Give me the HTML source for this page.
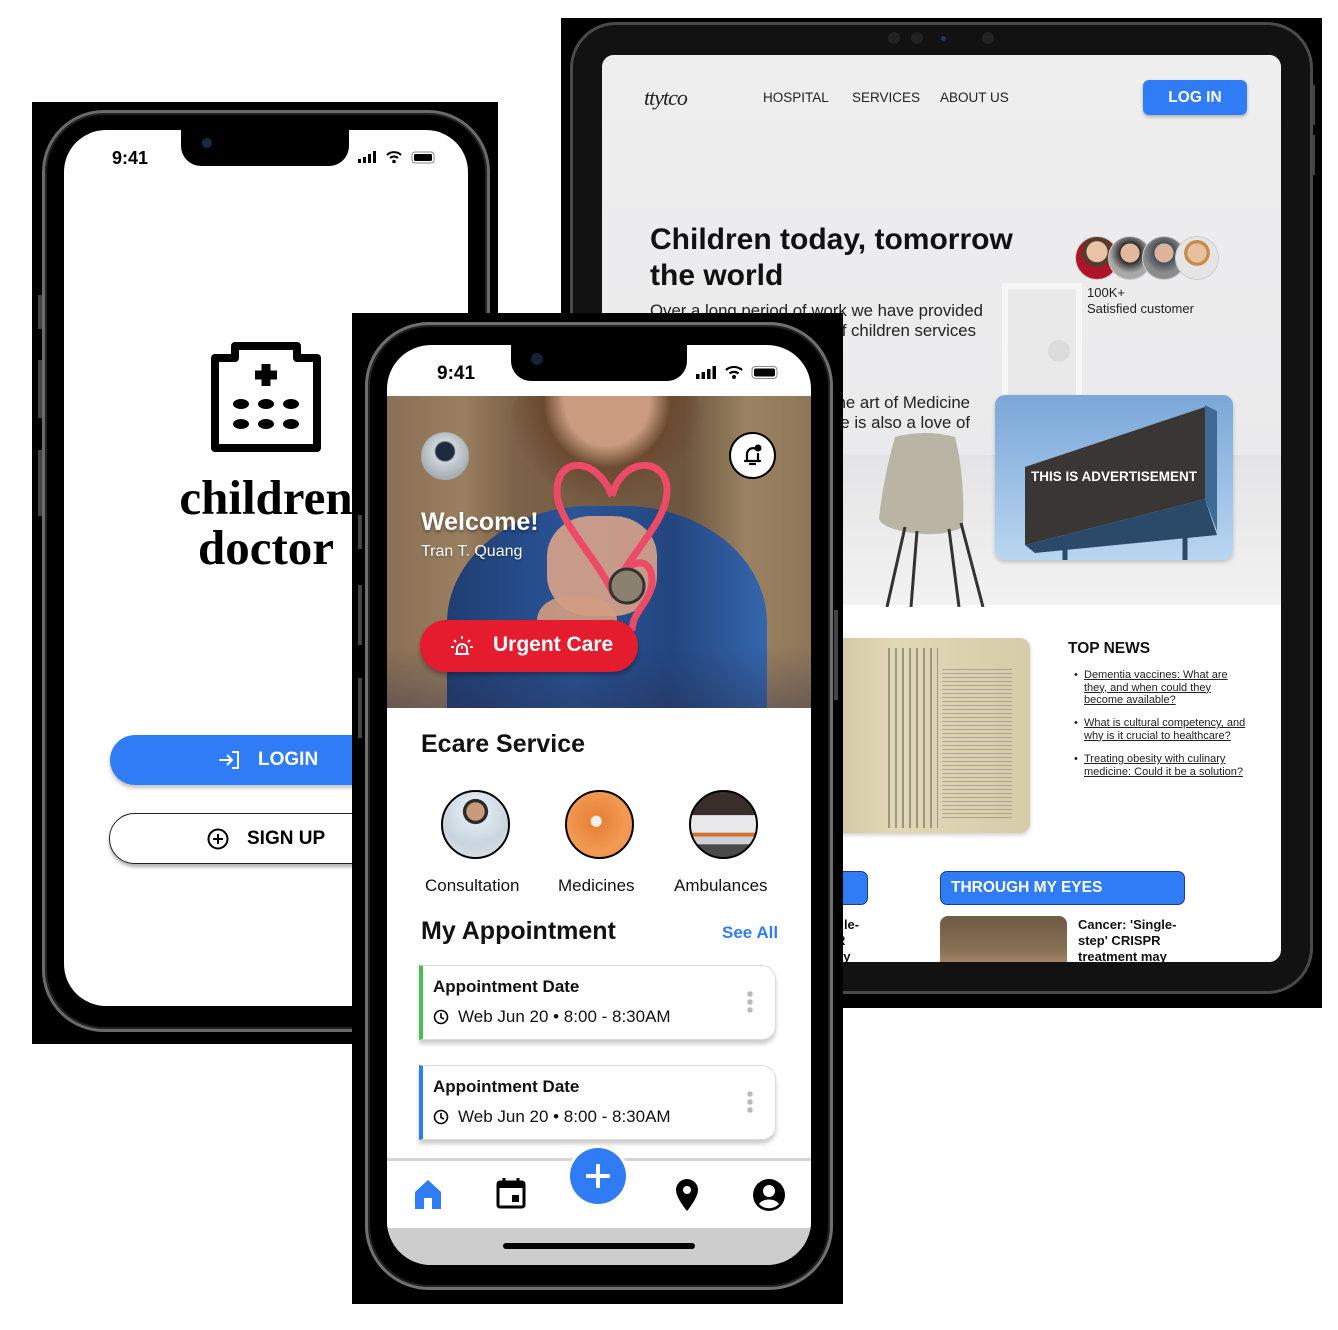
<!DOCTYPE html>
<html><head><meta charset="utf-8">
<style>
*{margin:0;padding:0;box-sizing:border-box}
body{width:1338px;height:1330px;background:#fff;position:relative;overflow:hidden;font-family:"Liberation Sans",Arial,sans-serif}
.a{position:absolute}
.t{position:absolute;white-space:nowrap}
</style></head><body>

<!-- ============ LEFT PHONE ============ -->
<div class="a" style="left:32px;top:102px;width:466px;height:942px;background:#000"></div>
<div class="a" style="left:42px;top:110px;width:448px;height:922px;border-radius:62px;border:3px solid #6a6a6a;box-shadow:inset 0 0 0 2px #222"></div>
<div class="a" style="left:38px;top:295px;width:4px;height:34px;background:#444"></div>
<div class="a" style="left:38px;top:360px;width:4px;height:58px;background:#444"></div>
<div class="a" style="left:38px;top:450px;width:4px;height:66px;background:#444"></div>
<div class="a" style="left:64px;top:130px;width:404px;height:876px;border-radius:42px;background:#fff;overflow:hidden">
  <div class="a" style="left:117px;top:0;width:168px;height:36px;background:#000;border-radius:0 0 20px 20px"></div>
  <div class="a" style="left:138px;top:8px;width:10px;height:10px;border-radius:50%;background:#1a2a44"></div>
  <div class="t" style="left:48px;top:18px;font-size:18px;font-weight:bold">9:41</div>
  <svg class="a" style="left:294px;top:21px" width="82" height="14" viewBox="0 0 82 14"><rect x="0" y="8" width="3" height="4" fill="#000"/><rect x="5" y="6" width="3" height="6" fill="#000"/><rect x="10" y="3" width="3" height="9" fill="#000"/><rect x="15" y="0" width="3" height="12" fill="#000"/><path d="M29 4a10 10 0 0 1 14 0M32 7a6 6 0 0 1 8 0" stroke="#000" stroke-width="2" fill="none"/><circle cx="36" cy="10.5" r="1.8"/><rect x="54" y="1" width="22" height="11" rx="3" fill="none" stroke="#888"/><rect x="56" y="3" width="18" height="7" rx="1.5" fill="#000"/></svg>
  <svg class="a" style="left:147px;top:212px" width="110" height="110" viewBox="0 0 110 110"><path d="M24 4h62v12h20v90H4V16h20z" fill="none" stroke="#000" stroke-width="8" stroke-linejoin="round"/><path d="M55 22v22M44 33h22" stroke="#000" stroke-width="9"/><g fill="#000"><ellipse cx="30" cy="62" rx="8" ry="5"/><ellipse cx="55" cy="62" rx="8" ry="5"/><ellipse cx="80" cy="62" rx="8" ry="5"/><ellipse cx="30" cy="82" rx="8" ry="5"/><ellipse cx="55" cy="82" rx="8" ry="5"/><ellipse cx="80" cy="82" rx="8" ry="5"/></g></svg>
  <div class="a" style="left:0;top:343px;width:404px;text-align:center;font-family:'Liberation Serif',serif;font-weight:bold;font-size:49px;line-height:50px">children<br>doctor</div>
  <div class="a" style="left:46px;top:605px;width:380px;height:50px;border-radius:25px;background:#2f7cf6;box-shadow:0 3px 4px rgba(0,0,0,.25)"></div>
  <svg class="a" style="left:154px;top:620px" width="22" height="20" viewBox="0 0 22 20"><path d="M1 10h12M9 5l5 5-5 5M14 2h6v16h-6" stroke="#fff" stroke-width="2" fill="none"/></svg>
  <div class="t" style="left:194px;top:619px;font-size:19px;font-weight:bold;color:#fff">LOGIN</div>
  <div class="a" style="left:45px;top:683px;width:380px;height:51px;border-radius:26px;border:1.5px solid #222;box-shadow:0 3px 3px rgba(0,0,0,.3)"></div>
  <svg class="a" style="left:143px;top:698px" width="22" height="22" viewBox="0 0 22 22"><circle cx="11" cy="11" r="9.5" stroke="#000" stroke-width="2" fill="none"/><path d="M11 6v10M6 11h10" stroke="#000" stroke-width="2"/></svg>
  <div class="t" style="left:183px;top:698px;font-size:19px;font-weight:bold">SIGN UP</div>
</div>

<!-- ============ TABLET ============ -->
<div class="a" style="left:561px;top:18px;width:761px;height:990px;background:#000"></div>
<div class="a" style="left:570px;top:22px;width:743px;height:972px;border-radius:46px;border:3px solid #4a4a4a;background:#121212"></div>
<div class="a" style="left:1312px;top:85px;width:3px;height:40px;background:#444"></div>
<div class="a" style="left:1312px;top:135px;width:3px;height:40px;background:#444"></div>
<div class="a" style="left:888px;top:32px;width:12px;height:12px;border-radius:50%;background:#222"></div>
<div class="a" style="left:911px;top:32px;width:12px;height:12px;border-radius:50%;background:#222"></div>
<div class="a" style="left:941px;top:36px;width:5px;height:5px;border-radius:50%;background:#1c3a66"></div>
<div class="a" style="left:982px;top:32px;width:12px;height:12px;border-radius:50%;background:#222"></div>
<div class="a" style="left:602px;top:55px;width:679px;height:907px;border-radius:12px;background:#fff;overflow:hidden">
  <div class="a" style="left:0;top:0;width:679px;height:550px;background:linear-gradient(#eeeeef,#e9e9eb)"></div>
  <div class="a" style="left:240px;top:400px;width:439px;height:150px;background:linear-gradient(#e4e4e6,#f2f2f2)"></div>
  <div class="a" style="left:400px;top:228px;width:80px;height:170px;border:6px solid #f6f6f6;background:#e9e9ea"></div>
  <div class="a" style="left:446px;top:285px;width:22px;height:22px;border-radius:50%;background:#dcdcdc"></div>
  <svg class="a" style="left:275px;top:372px" width="110" height="180" viewBox="0 0 110 180"><path d="M18 10q30-8 60 0q10 40 8 90q-20 10-50 6q-30-4-34-14q4-40 16-82z" fill="#b9b4a4"/><path d="M28 100l-18 80M40 104l-6 76M72 102l10 78M84 96l22 84" stroke="#333" stroke-width="3"/></svg>
  <div class="t" style="left:42px;top:30px;font-family:'Liberation Serif',serif;font-style:italic;font-size:22px;color:#222;letter-spacing:-1px">ttytco</div>
  <div class="t" style="left:161px;top:35px;font-size:13.5px;color:#222">HOSPITAL</div>
  <div class="t" style="left:250px;top:35px;font-size:13.5px;color:#222">SERVICES</div>
  <div class="t" style="left:338px;top:35px;font-size:13.5px;color:#222">ABOUT US</div>
  <div class="a" style="left:541px;top:25px;width:104px;height:35px;border-radius:6px;background:#2f7cf6;box-shadow:0 2px 3px rgba(0,0,0,.25);color:#fff;font-weight:bold;font-size:15.5px;text-align:center;line-height:35px">LOG IN</div>
  <div class="t" style="left:48px;top:167px;font-size:30px;font-weight:bold;line-height:36px;color:#111">Children today, tomorrow<br>the world</div>
  <div class="t" style="left:48px;top:246px;font-size:16.8px;line-height:20px;color:#222">Over a long period of work we have provided</div>
  <div class="a" style="left:0;top:266px;width:374px;text-align:right;font-size:16.8px;line-height:20px;color:#222">many kinds of children services</div>
  <div class="a" style="left:0;top:338px;width:368px;text-align:right;font-size:16.8px;line-height:20px;color:#222">practice the art of Medicine<br>and Medicine is also a love of</div>
  <div class="a" style="left:473px;top:181px;width:44px;height:44px;border-radius:50%;background:radial-gradient(circle at 50% 35%,#e8c3a8 0 30%,#5a3b2a 31% 45%,#b0132a 46%);border:1px solid #ccc"></div>
  <div class="a" style="left:506px;top:181px;width:44px;height:44px;border-radius:50%;background:radial-gradient(circle at 50% 38%,#e2b99c 0 28%,#2b2b2b 29%,#a9a9a9 60%);border:1px solid #ccc"></div>
  <div class="a" style="left:540px;top:181px;width:44px;height:44px;border-radius:50%;background:radial-gradient(circle at 50% 38%,#dcb49a 0 28%,#444e58 29%,#8c8c8c 60%);border:1px solid #ccc"></div>
  <div class="a" style="left:573px;top:181px;width:44px;height:44px;border-radius:50%;background:radial-gradient(circle at 50% 38%,#e7c09f 0 28%,#c98c48 29% 38%,#e5e5e5 39%);border:1px solid #ccc"></div>
  <div class="t" style="left:485px;top:230px;font-size:13px;line-height:16px;color:#222">100K+<br>Satisfied customer</div>
  <div class="a" style="left:393px;top:340px;width:238px;height:165px;border-radius:10px;overflow:hidden;background:linear-gradient(#7aa7d8,#b9d6f0);box-shadow:0 2px 4px rgba(0,0,0,.2)">
    <svg class="a" style="left:0;top:0" width="238" height="165" viewBox="0 0 238 165"><path d="M30 72L210 12v92L30 150z" fill="#3a3634"/><path d="M30 150L210 104l12 36L40 158z" fill="#2b4a6a"/><path d="M210 10l12 6v120l-12 -32z" fill="#3d6b94"/><path d="M70 150v15M190 125v40" stroke="#2b4a6a" stroke-width="5"/></svg>
    <div class="t" style="left:0;top:74px;width:238px;text-align:center;color:#fff;font-weight:bold;font-size:13.5px">THIS IS ADVERTISEMENT</div>
  </div>
  <div class="a" style="left:200px;top:583px;width:228px;height:195px;border-radius:10px;background:linear-gradient(90deg,#c9bf9a,#e1d8b6 40%,#d6cca8);box-shadow:0 2px 4px rgba(0,0,0,.2);overflow:hidden">
    <div class="a" style="left:86px;top:10px;width:50px;height:180px;background:repeating-linear-gradient(90deg,#555 0 2px,transparent 2px 7px);opacity:.5"></div>
    <div class="a" style="left:140px;top:30px;width:70px;height:150px;background:repeating-linear-gradient(0deg,#777 0 1px,transparent 1px 4px);opacity:.5"></div>
    <div class="a" style="left:0;top:40px;width:40px;height:140px;background:#5b7484;opacity:.6"></div>
  </div>
  <div class="t" style="left:466px;top:585px;font-weight:bold;font-size:15.5px;color:#111">TOP NEWS</div>
  <div class="a" style="left:472px;top:614px;font-size:11px;line-height:12.5px;color:#222">
    <div style="position:absolute;left:0;top:0">•</div>
    <div style="position:absolute;left:10px;top:0;width:160px;text-decoration:underline">Dementia vaccines: What are they, and when could they become available?</div>
    <div style="position:absolute;left:0;top:48px">•</div>
    <div style="position:absolute;left:10px;top:48px;width:172px;text-decoration:underline">What is cultural competency, and why is it crucial to healthcare?</div>
    <div style="position:absolute;left:0;top:84px">•</div>
    <div style="position:absolute;left:10px;top:84px;width:170px;text-decoration:underline">Treating obesity with culinary medicine: Could it be a solution?</div>
  </div>
  <div class="a" style="left:180px;top:816px;width:86px;height:34px;border-radius:7px;background:#2f7cf6;border:1px solid #1d3f80"></div>
  <div class="a" style="left:338px;top:816px;width:245px;height:34px;border-radius:7px;background:#2f7cf6;border:1px solid #1d3f80;color:#fff;font-weight:bold;font-size:15.5px;line-height:32px;padding-left:10px">THROUGH MY EYES</div>
  <div class="a" style="left:338px;top:861px;width:127px;height:60px;border-radius:8px;background:linear-gradient(#6e5a45,#8a7255 60%,#c89d7d)"></div>
  <div class="t" style="left:476px;top:862px;font-weight:bold;font-size:13px;line-height:16px;color:#111">Cancer: 'Single-<br>step' CRISPR<br>treatment may</div>
  <div class="t" style="left:234px;top:862px;font-weight:bold;font-size:13px;line-height:16px;color:#111">gle-<br>R<br>ay</div>
</div>

<!-- ============ FRONT PHONE ============ -->
<div class="a" style="left:352px;top:313px;width:491px;height:991px;background:#000"></div>
<div class="a" style="left:365px;top:322px;width:468px;height:968px;border-radius:64px;border:3px solid #707070;box-shadow:inset 0 0 0 2px #222"></div>
<div class="a" style="left:358px;top:515px;width:4px;height:34px;background:#444"></div>
<div class="a" style="left:358px;top:585px;width:4px;height:60px;background:#444"></div>
<div class="a" style="left:358px;top:678px;width:4px;height:60px;background:#444"></div>
<div class="a" style="left:834px;top:610px;width:4px;height:90px;background:#444"></div>
<div class="a" style="left:387px;top:345px;width:424px;height:920px;border-radius:44px;background:#fff;overflow:hidden">
  <div class="a" style="left:124px;top:0;width:176px;height:36px;background:#000;border-radius:0 0 20px 20px"></div>
  <div class="a" style="left:144px;top:8px;width:12px;height:12px;border-radius:50%;background:#142438"></div>
  <div class="t" style="left:50px;top:18px;font-size:19px;font-weight:bold">9:41</div>
  <svg class="a" style="left:309px;top:20px" width="90" height="16" viewBox="0 0 90 16"><rect x="0" y="9" width="3.5" height="5"/><rect x="5.5" y="7" width="3.5" height="7"/><rect x="11" y="4" width="3.5" height="10"/><rect x="16.5" y="1" width="3.5" height="13"/><path d="M30 5a12 12 0 0 1 16 0M33.5 8.5a7 7 0 0 1 9 0" stroke="#000" stroke-width="2.2" fill="none"/><circle cx="38" cy="12" r="2"/><rect x="56" y="1.5" width="25" height="12" rx="3.5" fill="none" stroke="#888"/><rect x="58" y="3.5" width="21" height="8" rx="2"/></svg>
  <!-- hero -->
  <div class="a" style="left:0;top:51px;width:424px;height:312px;overflow:hidden;background:linear-gradient(90deg,#8a7055 0%,#9a7f60 18%,#7c6248 30%,#6d5640 70%,#9b8262 85%,#8f7658 100%)">
    <div class="a" style="left:60px;top:110px;width:320px;height:260px;border-radius:45% 45% 0 0;background:linear-gradient(90deg,#1f3f72,#2a5499 40%,#23467f 70%,#3566ad)"></div>
    <div class="a" style="left:120px;top:-40px;width:200px;height:150px;border-radius:50%;background:radial-gradient(ellipse at 50% 30%,#c99c80 0 30%,#6b4a30 45%,rgba(107,74,48,0) 70%)"></div>
    <div class="a" style="left:160px;top:120px;width:110px;height:100px;border-radius:40%;background:#d8a288;opacity:.9"></div>
    <div class="a" style="left:150px;top:200px;width:80px;height:60px;border-radius:40%;background:#d39c82;opacity:.9"></div>
    <div class="a" style="left:0;top:250px;width:424px;height:62px;background:linear-gradient(transparent,rgba(40,40,70,.35))"></div>
    <svg class="a" style="left:150px;top:40px" width="150" height="200" viewBox="0 0 150 200"><path d="M75 60C60 20 20 20 20 55c0 30 35 60 55 100C95 115 130 85 130 55c0-35-45-35-55 5" fill="none" stroke="#ec4a66" stroke-width="7"/><path d="M75 155c10-30 40-40 40-10c0 20-20 30-20 50" fill="none" stroke="#ec4a66" stroke-width="7"/><circle cx="90" cy="150" r="17" fill="#8a8170" stroke="#333" stroke-width="3"/></svg>
  </div>
  <div class="a" style="left:34px;top:87px;width:48px;height:48px;border-radius:50%;background:radial-gradient(circle at 50% 40%,#1e2a40 0 25%,#cfd4d8 30%,#8b96a0);border:1px solid #aaa"></div>
  <div class="a" style="left:342px;top:87px;width:47px;height:47px;border-radius:50%;background:#fff;border:2px solid #000"></div>
  <svg class="a" style="left:353px;top:97px" width="26" height="26" viewBox="0 0 26 26"><path d="M5 19h15M7 19v-7a6 6 0 0 1 9-5M18 12v7M10 22h5" stroke="#000" stroke-width="2.2" fill="none" stroke-linecap="round"/><circle cx="18" cy="6" r="3.5"/></svg>
  <div class="t" style="left:34px;top:163px;color:#fff;font-size:25px;font-weight:bold;text-shadow:0 2px 3px rgba(0,0,0,.4)">Welcome!</div>
  <div class="t" style="left:34px;top:198px;color:#fff;font-size:16px;text-shadow:0 1px 2px rgba(0,0,0,.4)">Tran T. Quang</div>
  <div class="a" style="left:33px;top:275px;width:218px;height:52px;border-radius:26px;background:#e51c2e;box-shadow:0 3px 5px rgba(0,0,0,.3)"></div>
  <svg class="a" style="left:63px;top:289px" width="24" height="24" viewBox="0 0 24 24"><path d="M5 20h14M7 20v-5a5 5 0 0 1 10 0v5M12 12v3" stroke="#fff" stroke-width="2" fill="none"/><path d="M12 2v3M4 6l2 2M20 6l-2 2M1 13h3M20 13h3" stroke="#fff" stroke-width="2"/></svg>
  <div class="t" style="left:106px;top:288px;color:#fff;font-size:21px;font-weight:bold">Urgent Care</div>
  <div class="t" style="left:34px;top:385px;font-size:25px;font-weight:bold;color:#111">Ecare Service</div>
  <div class="a" style="left:54px;top:445px;width:69px;height:69px;border-radius:50%;border:2px solid #000;background:radial-gradient(circle at 50% 30%,#c89a7a 0 16%,#2a2a2a 17% 22%,#dfe8ef 23%,#c8d4de 60%,#e7e7e7)"></div>
  <div class="a" style="left:178px;top:445px;width:69px;height:69px;border-radius:50%;border:2px solid #000;background:radial-gradient(circle at 45% 45%,#f6f0ea 0 10%,#e9823a 12%,#f39a52 60%,#e8894a)"></div>
  <div class="a" style="left:302px;top:445px;width:69px;height:69px;border-radius:50%;border:2px solid #000;background:linear-gradient(#3a2e2a 0 35%,#e8e8ec 36% 62%,#d0722e 63% 68%,#cfd3d8 69% 80%,#4a4a4a 81%)"></div>
  <div class="t" style="left:38px;top:531px;font-size:17px;color:#111">Consultation</div>
  <div class="t" style="left:171px;top:531px;font-size:17px;color:#111">Medicines</div>
  <div class="t" style="left:287px;top:531px;font-size:17px;color:#111">Ambulances</div>
  <div class="t" style="left:34px;top:572px;font-size:25px;font-weight:bold;color:#111">My Appointment</div>
  <div class="t" style="left:335px;top:578px;font-size:17px;font-weight:bold;color:#2f7cf6">See All</div>
  <div class="a" style="left:32px;top:620px;width:357px;height:75px;border-radius:0 14px 14px 0;background:#fff;border:1px solid #ddd;border-left:4px solid #4cbc5a;box-shadow:0 4px 4px rgba(0,0,0,.2)"></div>
  <div class="t" style="left:46px;top:632px;font-size:17px;font-weight:bold;color:#111">Appointment Date</div>
  <svg class="a" style="left:46px;top:664px" width="16" height="16" viewBox="0 0 16 16"><circle cx="8" cy="8" r="6.5" stroke="#000" stroke-width="1.6" fill="none"/><path d="M8 4v4.5l3 1.5" stroke="#000" stroke-width="1.6" fill="none"/></svg>
  <div class="t" style="left:71px;top:662px;font-size:17px;color:#111">Web Jun 20 • 8:00 - 8:30AM</div>
  <div class="a" style="left:360px;top:645px;width:6px;height:24px;background:radial-gradient(circle,#bbb 2.5px,transparent 3px) 0 0/6px 8px"></div>
  <div class="a" style="left:32px;top:720px;width:357px;height:75px;border-radius:0 14px 14px 0;background:#fff;border:1px solid #ddd;border-left:4px solid #2f7cf6;box-shadow:0 4px 4px rgba(0,0,0,.2)"></div>
  <div class="t" style="left:46px;top:732px;font-size:17px;font-weight:bold;color:#111">Appointment Date</div>
  <svg class="a" style="left:46px;top:764px" width="16" height="16" viewBox="0 0 16 16"><circle cx="8" cy="8" r="6.5" stroke="#000" stroke-width="1.6" fill="none"/><path d="M8 4v4.5l3 1.5" stroke="#000" stroke-width="1.6" fill="none"/></svg>
  <div class="t" style="left:71px;top:762px;font-size:17px;color:#111">Web Jun 20 • 8:00 - 8:30AM</div>
  <div class="a" style="left:360px;top:745px;width:6px;height:24px;background:radial-gradient(circle,#bbb 2.5px,transparent 3px) 0 0/6px 8px"></div>
  <div class="a" style="left:0;top:813px;width:424px;height:72px;background:#fff;border-top:3px solid #d4d4d4"></div>
  <div class="a" style="left:180px;top:800px;width:62px;height:62px;border-radius:50%;background:#fff"></div>
  <div class="a" style="left:183px;top:803px;width:56px;height:56px;border-radius:50%;background:#2f7cf6"></div>
  <svg class="a" style="left:197px;top:817px" width="28" height="28" viewBox="0 0 28 28"><path d="M14 2v24M2 14h24" stroke="#fff" stroke-width="4"/></svg>
  <svg class="a" style="left:27px;top:834px" width="28" height="30" viewBox="0 0 28 30"><path d="M14 1L1 13v17h9v-11h8v11h9V13z" fill="#2f7cf6"/></svg>
  <svg class="a" style="left:109px;top:832px" width="30" height="32" viewBox="0 0 30 32"><rect x="2" y="5" width="26" height="25" rx="2" fill="none" stroke="#000" stroke-width="3"/><rect x="2" y="5" width="26" height="6" fill="#000"/><path d="M8 1v6M22 1v6" stroke="#000" stroke-width="3"/><rect x="16" y="18" width="7" height="7" fill="#000"/></svg>
  <svg class="a" style="left:288px;top:833px" width="24" height="34" viewBox="0 0 24 34"><path d="M12 1a11 11 0 0 0-11 11c0 8 11 21 11 21s11-13 11-21A11 11 0 0 0 12 1z" fill="#000"/><circle cx="12" cy="12" r="4" fill="#fff"/></svg>
  <svg class="a" style="left:366px;top:834px" width="32" height="32" viewBox="0 0 32 32"><circle cx="16" cy="16" r="16" fill="#000"/><circle cx="16" cy="12" r="6" fill="#fff"/><path d="M6 25c4-6 16-6 20 0a14 14 0 0 1-20 0z" fill="#fff"/></svg>
  <div class="a" style="left:0;top:883px;width:424px;height:37px;background:#cdcdcd"></div>
  <div class="a" style="left:116px;top:898px;width:192px;height:6px;border-radius:3px;background:#000"></div>
</div>
</body></html>
